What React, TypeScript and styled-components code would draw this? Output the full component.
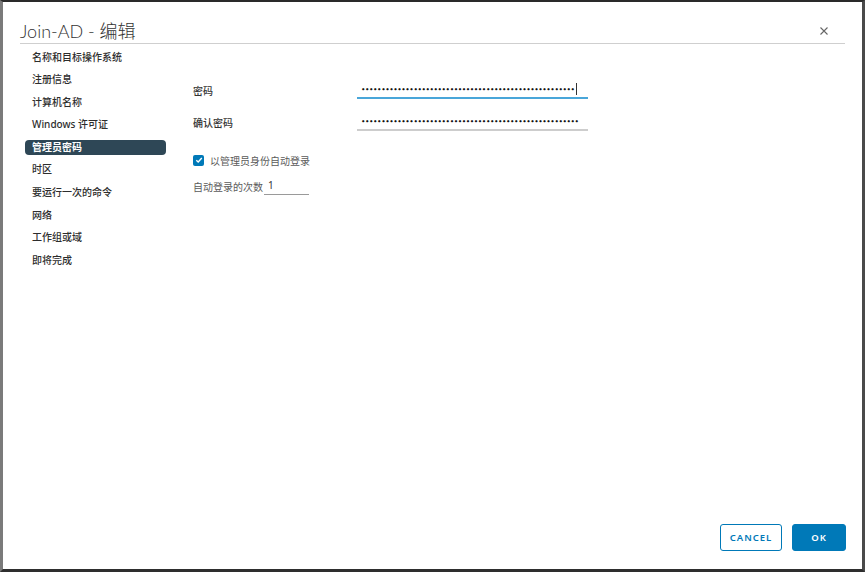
import React from 'react';
import styled, { createGlobalStyle } from 'styled-components';

const GlobalStyle = createGlobalStyle`
    html, body {
        margin: 0;
        padding: 0;
        background: #2b2b2b;
    }
    * {
        box-sizing: border-box;
    }
`;

const Window = styled.div`
    width: 865px;
    height: 572px;
    background: #ffffff;
    border-top: 2px solid #2a2a2a;
    border-left: 3px solid #7a7a7a;
    border-right: 3px solid #4a4a4a;
    border-bottom: 3px solid #2e2e2e;
    display: flex;
    flex-direction: column;
    font-family: "Noto Sans", "Noto Sans CJK SC", sans-serif;
    color: #333;
`;

const Header = styled.div`
    margin: 0 17px 0 17px;
    padding: 17px 17px 0 0;
    display: flex;
    align-items: center;
    justify-content: space-between;
    border-bottom: 1px solid #cfcfcf;
`;

const Title = styled.h1`
    margin: 0;
    font-family: "Lato", "Noto Sans CJK SC", sans-serif;
    font-weight: 300;
    font-size: 18px;
    line-height: 24px;
    color: #333;
`;

const CloseButton = styled.button`
    border: none;
    background: transparent;
    padding: 0;
    width: 8px;
    height: 8px;
    display: flex;
    align-items: center;
    justify-content: center;
    cursor: pointer;
`;

const Body = styled.div`
    flex: 1;
    display: flex;
    padding-left: 22px;
`;

const Nav = styled.ul`
    list-style: none;
    margin: 0;
    padding: 5.5px 0 0 0;
    width: 141px;
`;

const NavItem = styled.li<{ $active?: boolean }>`
    height: 15px;
    line-height: 15px;
    margin-bottom: 7.6px;
    padding-left: 7px;
    border-radius: 4px;
    font-size: 10px;
    font-weight: ${p => (p.$active ? 700 : 500)};
    color: ${p => (p.$active ? '#ffffff' : '#2d2d2d')};
    background: ${p => (p.$active ? '#2e4756' : 'transparent')};
    white-space: nowrap;
`;

const Form = styled.div`
    margin-left: 27px;
    padding-top: 37px;
    display: flex;
    flex-direction: column;
`;

const FieldRow = styled.div`
    display: flex;
    align-items: center;
    height: 18px;
    margin-bottom: 14px;
`;

const Label = styled.label`
    width: 164px;
    font-size: 10px;
    font-weight: 500;
    color: #333;
`;

const PasswordBox = styled.div<{ $focused?: boolean }>`
    width: 231px;
    height: 18px;
    display: flex;
    align-items: center;
    padding-left: 4px;
    border-bottom: ${p => (p.$focused ? '2px solid #49a6d9' : '2px solid #cdcdcd')};
    font-family: "DejaVu Sans", sans-serif;
    font-size: 7.6px;
    letter-spacing: -0.45px;
    color: #111;
    overflow: hidden;
    white-space: nowrap;
`;

const Caret = styled.span`
    display: inline-block;
    width: 1px;
    height: 12px;
    background: #333;
    margin-left: 1px;
`;

const CheckRow = styled.div`
    display: flex;
    align-items: center;
    height: 14px;
    margin-top: 8px;
    gap: 6px;
`;

const CheckBox = styled.span`
    width: 11px;
    height: 11px;
    border-radius: 2px;
    background: #0079b8;
    display: flex;
    align-items: center;
    justify-content: center;
`;

const CheckLabel = styled.span`
    font-size: 10px;
    color: #5a5a5a;
`;

const CountRow = styled.div`
    display: flex;
    align-items: center;
    height: 18px;
    margin-top: 10px;
`;

const CountLabel = styled.span`
    font-size: 10px;
    color: #5a5a5a;
    margin-right: 1px;
`;

const CountInput = styled.div`
    width: 45px;
    height: 18px;
    padding-left: 4px;
    line-height: 17px;
    font-size: 10px;
    color: #333;
    border-bottom: 1px solid #9a9a9a;
`;

const Footer = styled.div`
    display: flex;
    justify-content: flex-end;
    gap: 10px;
    padding: 0 16px 18px 0;
`;

const Button = styled.button<{ $primary?: boolean }>`
    height: 27px;
    min-width: ${p => (p.$primary ? '54px' : '62px')};
    border-radius: 3px;
    border: 1px solid #0079b8;
    background: ${p => (p.$primary ? '#0079b8' : '#ffffff')};
    color: ${p => (p.$primary ? '#ffffff' : '#0079b8')};
    font-family: "Noto Sans", sans-serif;
    font-size: 9.5px;
    font-weight: 600;
    letter-spacing: 1px;
    padding: 0 8px;
    cursor: pointer;
`;

const navItems = [
    '名称和目标操作系统',
    '注册信息',
    '计算机名称',
    'Windows 许可证',
    '管理员密码',
    '时区',
    '要运行一次的命令',
    '网络',
    '工作组或域',
    '即将完成',
];

function App() {
    const dots1 = '•'.repeat(53);
    const dots2 = '•'.repeat(54);
    return (
        <>
            <GlobalStyle />
            <Window>
                <Header>
                    <Title>Join-AD - 编辑</Title>
                    <CloseButton aria-label="close">
                        <svg width="8" height="8" viewBox="0 0 8 8">
                            <path d="M0.5 0.5 L7.5 7.5 M7.5 0.5 L0.5 7.5" stroke="#666" strokeWidth="1.1" />
                        </svg>
                    </CloseButton>
                </Header>
                <Body>
                    <Nav>
                        {navItems.map(item => (
                            <NavItem key={item} $active={item === '管理员密码'}>{item}</NavItem>
                        ))}
                    </Nav>
                    <Form>
                        <FieldRow>
                            <Label>密码</Label>
                            <PasswordBox $focused>{dots1}<Caret /></PasswordBox>
                        </FieldRow>
                        <FieldRow>
                            <Label>确认密码</Label>
                            <PasswordBox>{dots2}</PasswordBox>
                        </FieldRow>
                        <CheckRow>
                            <CheckBox>
                                <svg width="8" height="8" viewBox="0 0 8 8">
                                    <path d="M1.3 4.2 L3.2 6 L6.8 2" stroke="#fff" strokeWidth="1.4" fill="none" />
                                </svg>
                            </CheckBox>
                            <CheckLabel>以管理员身份自动登录</CheckLabel>
                        </CheckRow>
                        <CountRow>
                            <CountLabel>自动登录的次数</CountLabel>
                            <CountInput>1</CountInput>
                        </CountRow>
                    </Form>
                </Body>
                <Footer>
                    <Button>CANCEL</Button>
                    <Button $primary>OK</Button>
                </Footer>
            </Window>
        </>
    );
}

export default App;
